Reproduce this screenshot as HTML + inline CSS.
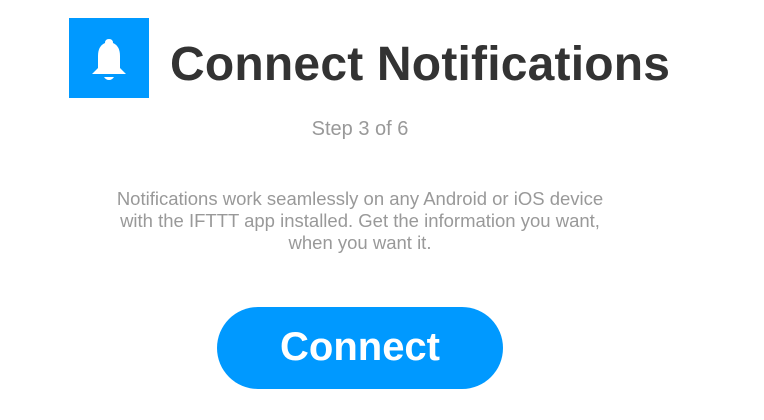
<!DOCTYPE html>
<html><head><meta charset="utf-8"><style>
html,body{margin:0;padding:0;background:#fff;width:764px;height:420px;overflow:hidden;font-family:"Liberation Sans",sans-serif;position:relative}
.icon{position:absolute;left:69px;top:18px;width:80px;height:80px;background:#0099ff}
.title{position:absolute;left:170px;top:37px;font-size:48px;font-weight:bold;color:#333;white-space:nowrap;line-height:56px;letter-spacing:0.2px}
.step{position:absolute;left:0;width:720px;top:118px;text-align:center;font-size:20px;color:#999}
.p{position:absolute;left:0;width:720px;top:188px;text-align:center;font-size:18.5px;line-height:22px;color:#999;white-space:nowrap}
.btn{position:absolute;left:217px;top:307px;width:286px;height:82px;border-radius:41px;background:#0099ff;color:#fff;font-weight:bold;font-size:40px;text-align:center;line-height:80px}
</style></head><body>
<div class="icon"><svg width="80" height="80" viewBox="0 0 80 80"><path d="M36 25 Q36 21 40 21 Q44 21 44 25 Q51 28 51 38 L51 50 L57 56 L23 56 L29 50 L29 38 Q29 28 36 25Z" fill="#fff"/><path d="M35 59 L45 59 Q43 62 40 62 Q37 62 35 59Z" fill="#fff"/></svg></div>
<div class="title">Connect Notifications</div>
<div class="step">Step 3 of 6</div>
<div class="p">Notifications work seamlessly on any Android or iOS device<br>with the IFTTT app installed. Get the information you want,<br>when you want it.</div>
<div class="btn">Connect</div>
</body></html>
